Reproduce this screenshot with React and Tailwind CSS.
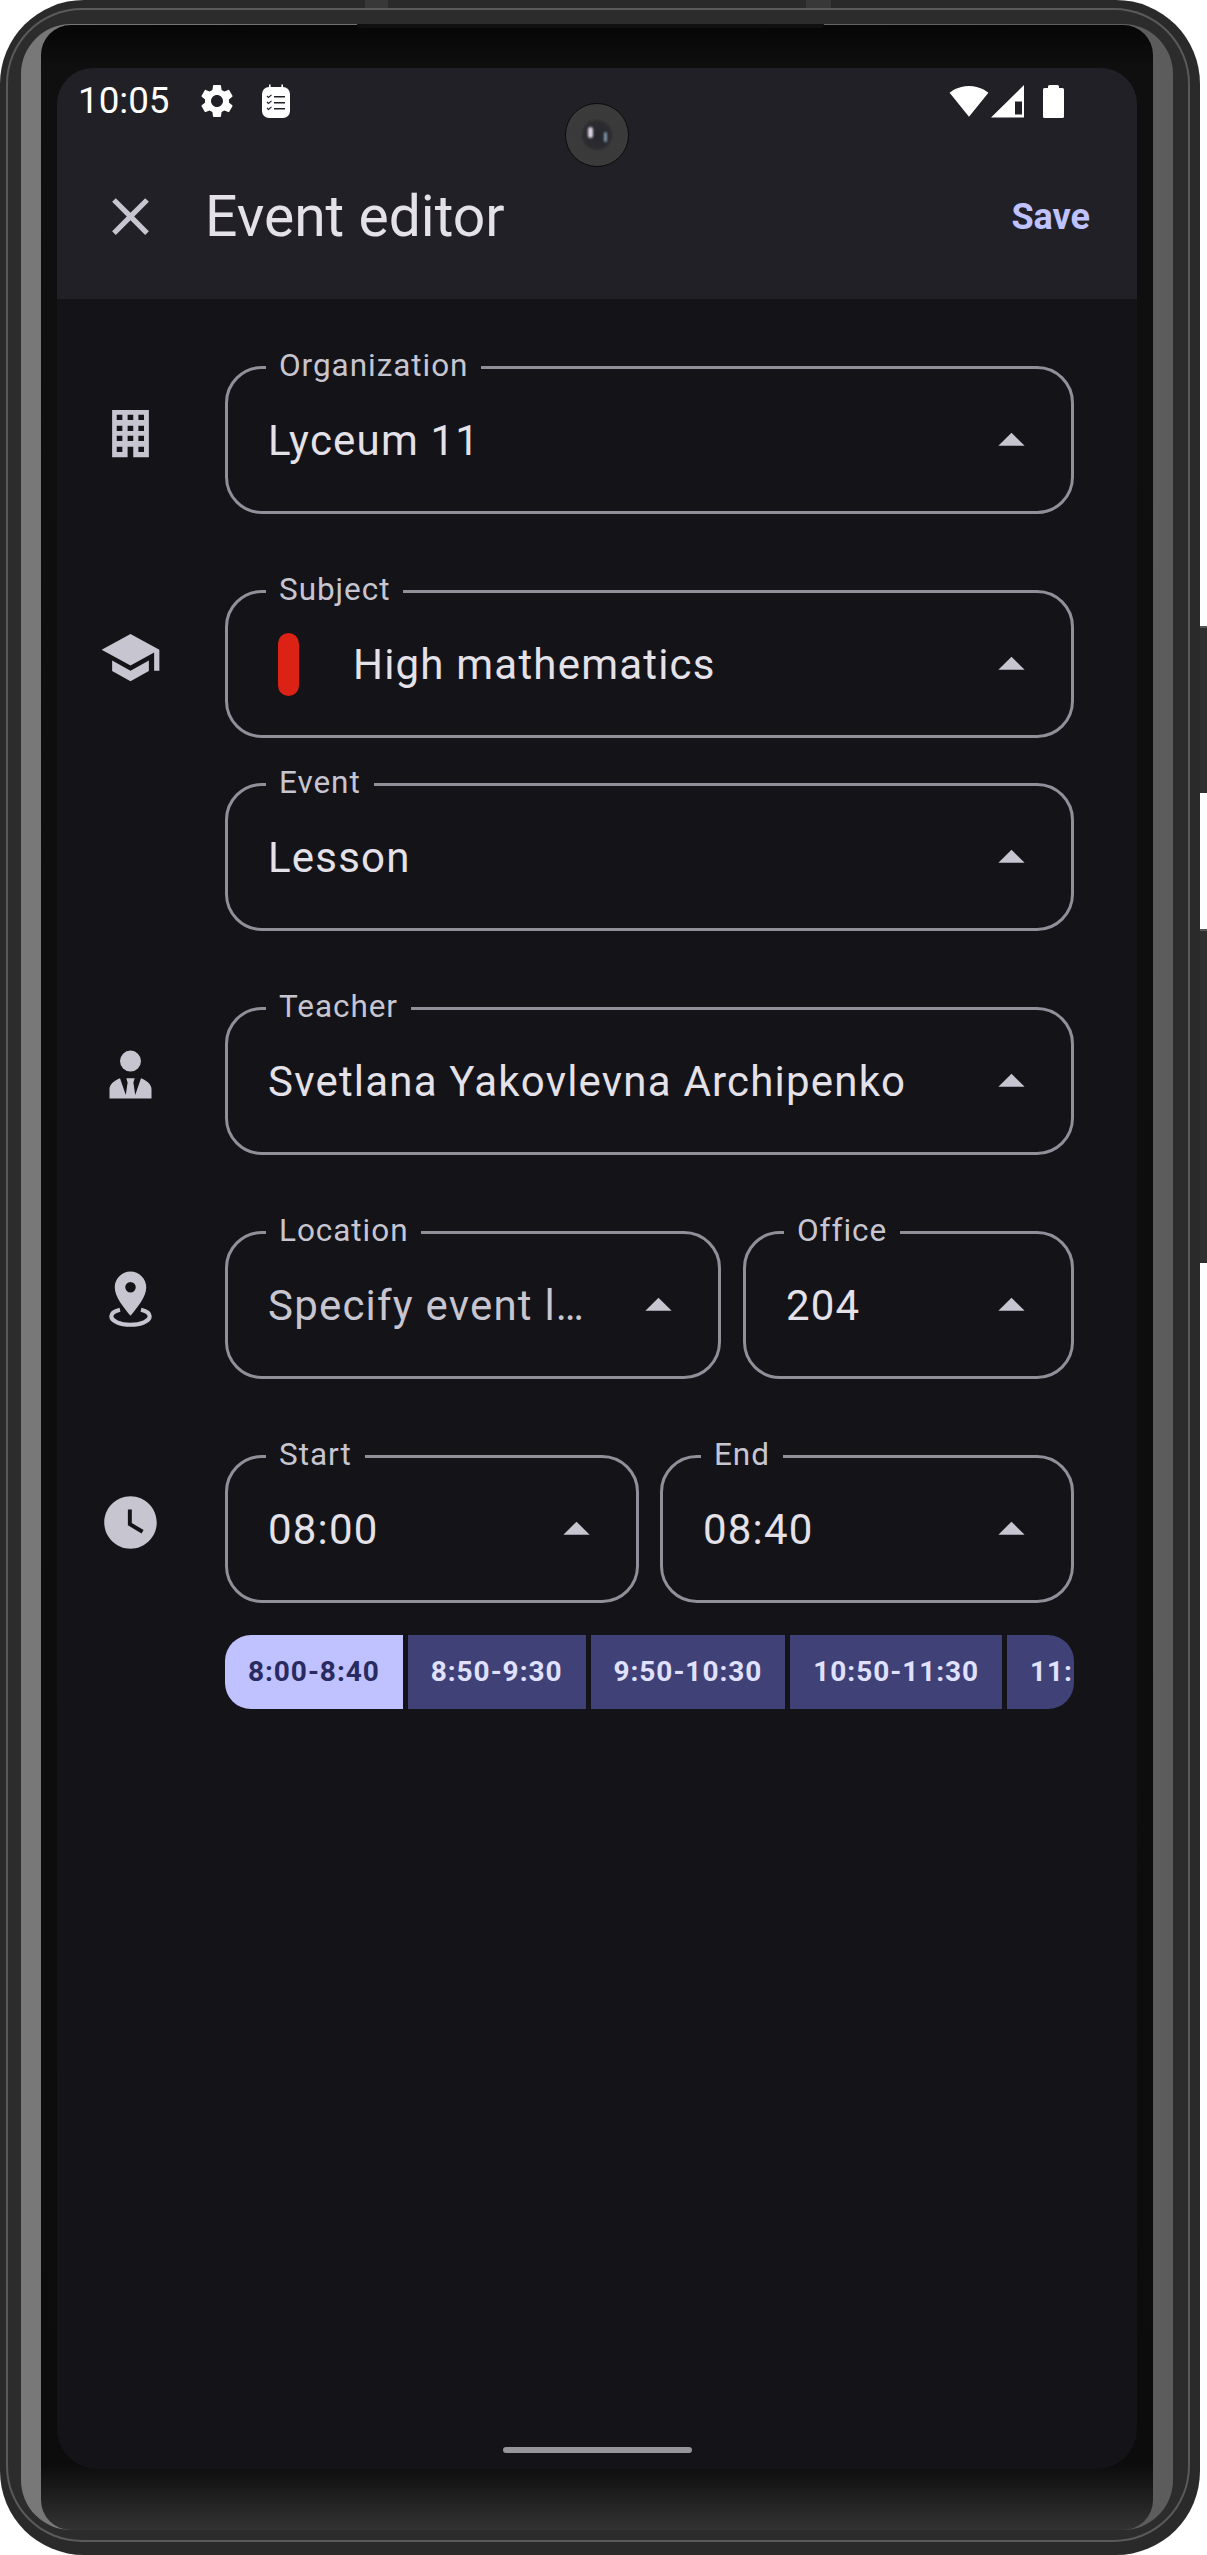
import React from 'react';

const iconClass = 'w-[63px] h-[63px] fill-[#c7c5d0] shrink-0';

function BuildingIcon() {
  return (
    <svg viewBox="0 0 24 24" className={iconClass}>
      <path
        fillRule="evenodd"
        d="M5 3h14v18h-5.95v-4H10.9v4H5z M6.75 4.9v2h2.15v-2z M10.9 4.9v2h2.15v-2z M15 4.9v2h2.15v-2z M6.75 9v2h2.15V9z M10.9 9v2h2.15V9z M15 9v2h2.15V9z M6.75 12.9v2h2.15v-2z M10.9 12.9v2h2.15v-2z M15 12.9v2h2.15v-2z M6.75 17v2h2.15v-2z M15 17v2h2.15v-2z"
      />
    </svg>
  );
}

function SchoolIcon() {
  return (
    <svg viewBox="0 0 24 24" className={iconClass}>
      <path d="M5 13.18v4L12 21l7-3.82v-4L12 17l-7-3.82zM12 3L1 9l11 6 9-4.91V17h2V9L12 3z" />
    </svg>
  );
}

function TeacherIcon() {
  return (
    <svg viewBox="0 0 24 24" className={iconClass}>
      <circle cx="12" cy="6.9" r="4" />
      <path d="M4 21.1V17.6C4 15.8 5.5 14.4 8 13.4L10.2 19.8L10.9 15L10.4 13.4H13.6L13.1 15L13.8 19.8L16 13.4C18.5 14.4 20 15.8 20 17.6V21.1Z" />
    </svg>
  );
}

function PinIcon() {
  return (
    <svg viewBox="0 0 24 24" className={iconClass}>
      <path
        fillRule="evenodd"
        d="M12 1.7C8.7 1.7 6 4.4 6 7.7C6 11.5 9.5 15.5 12 18.6C14.5 15.5 18 11.5 18 7.7C18 4.4 15.3 1.7 12 1.7ZM12 5.7a2 2 0 1 0 0 4a2 2 0 1 0 0-4Z"
      />
      <path
        d="M8 16.3C5.8 16.8 4.7 17.7 4.7 18.8C4.7 20.6 8 22 12 22C16 22 19.3 20.6 19.3 18.8C19.3 17.7 18.2 16.8 16 16.3"
        fill="none"
        stroke="#c7c5d0"
        strokeWidth="1.6"
      />
    </svg>
  );
}

function ClockIcon() {
  return (
    <svg viewBox="0 0 24 24" className={iconClass}>
      <path d="M12 2C6.5 2 2 6.5 2 12s4.5 10 10 10 10-4.5 10-10S17.5 2 12 2zm4.2 14.2L11 13V7h1.5v5.2l4.5 2.7-.8 1.3z" />
    </svg>
  );
}

function Field({ label, value, muted, pill, className = '' }) {
  return (
    <div className={`relative h-[148px] rounded-[37px] border-[3px] border-[#918f9a] flex items-center ${className}`}>
      <span className="absolute left-[38px] top-[-24px] px-[13px] bg-[#131318] text-[31.5px] leading-[42px] tracking-[0.95px] text-[#c7c5d0] whitespace-nowrap">
        {label}
      </span>
      {pill && <span className="ml-[50px] mr-[-14px] w-[21px] h-[63px] rounded-full bg-[#dc2115] shrink-0" />}
      <span className={`flex-1 min-w-0 pl-[40px] whitespace-nowrap overflow-hidden text-[42px] tracking-[1.2px] ${pill ? 'ml-[28px]' : ''} ${muted ? 'text-[#c7c5d0]' : 'text-[#e4e1e9]'}`}>
        {value}
      </span>
      <svg viewBox="0 0 24 24" className="w-[63px] h-[63px] fill-[#c7c5d0] shrink-0 mr-[28px]">
        <path d="M7 14l5-5 5 5z" />
      </svg>
    </div>
  );
}

function Row({ icon, className = '', children }) {
  return (
    <div className={`flex items-start pl-[42px] pr-[63px] ${className}`}>
      <div className="w-[63px] mt-[36px] shrink-0">{icon}</div>
      <div className="flex-1 min-w-0 ml-[63px]">{children}</div>
    </div>
  );
}

const slots = ['8:00-8:40', '8:50-9:30', '9:50-10:30', '10:50-11:30', '11:50-12:30'];

export default function App() {
  return (
    <div className="relative w-[1207px] h-[2555px] bg-white overflow-hidden font-['Roboto',sans-serif]">
      {/* side buttons */}
      <div className="absolute left-[1198px] top-[626px] w-[9px] h-[167px] bg-[#303030] border-t-2 border-[#555]" />
      <div className="absolute left-[1198px] top-[929px] w-[9px] h-[334px] bg-[#303030] border-t-2 border-[#555]" />

      {/* phone frame */}
      <div className="relative w-[1200px] h-[2555px] rounded-[84px] bg-[#2a2a2a] pl-[6px] pr-[10px] pt-[8px] pb-[13px]">
        <div className="absolute left-[365px] top-0 w-[23px] h-[8px] bg-[#383838]" />
        <div className="absolute left-[806px] top-0 w-[25px] h-[8px] bg-[#383838]" />
        <div className="h-full rounded-[76px] bg-[#5a5a5a] p-[2px]">
          <div className="relative h-full rounded-[74px] bg-[#2c2c2c] pl-[13px] pr-[15px] pt-[14px] pb-[10px]">
            {/* earpiece lip */}
            <div className="absolute left-[349px] top-[14px] w-[467px] h-[4px] rounded-b-[4px] bg-[#101010]" />
            <div className="h-full rounded-[50px] bg-linear-to-r from-[#787878] to-[#5c5c5c] pl-[20px] pr-[20px] pt-[1px]">
              <div className="h-full rounded-[30px] px-[16px] pt-[43px] bg-[linear-gradient(to_bottom,#060606_0,#0f0f0f_44px,#0c0c0c_2440px,#333333_100%)]">
                {/* screen */}
                <div className="relative h-[2401px] rounded-t-[36px] rounded-b-[40px] overflow-hidden bg-[#131318] flex flex-col">
                  {/* camera */}
                  <div className="absolute left-[508px] top-[35px] w-[64px] h-[64px] rounded-full border border-[#0c0c0c] bg-[radial-gradient(circle,#25252c_0%,#2c2c30_30%,#3a3a3a_38%,#3c3c3c_100%)]">
                    <div className="absolute left-[22px] top-[23px] w-[5px] h-[11px] rounded-full bg-[#d8d0e0] blur-[1px]" />
                    <div className="absolute left-[38px] top-[28px] w-[3px] h-[10px] rounded-full bg-[#7f9ab0] blur-[1px]" />
                  </div>

                  {/* app bar */}
                  <div className="h-[231px] bg-[#202026] shrink-0">
                    <div className="h-[66px] flex items-center pl-[21px] pr-[73px] text-white">
                      <span className="text-[36.75px] leading-none">10:05</span>
                      <svg viewBox="0 0 24 24" className="w-[40px] h-[40px] fill-white ml-[27px]">
                        <path d="M19.14 12.94c.04-.3.06-.61.06-.94 0-.32-.02-.64-.07-.94l2.03-1.58c.18-.14.23-.41.12-.61l-1.92-3.32c-.12-.22-.37-.29-.59-.22l-2.39.96c-.5-.38-1.03-.7-1.62-.94l-.36-2.54c-.04-.24-.24-.41-.48-.41h-3.84c-.24 0-.43.17-.47.41l-.36 2.54c-.59.24-1.13.57-1.62.94l-2.39-.96c-.22-.08-.47 0-.59.22L2.74 8.87c-.12.21-.08.47.12.61l2.03 1.58c-.05.3-.09.63-.09.94s.02.64.07.94l-2.03 1.58c-.18.14-.23.41-.12.61l1.92 3.32c.12.22.37.29.59.22l2.39-.96c.5.38 1.03.7 1.62.94l.36 2.54c.05.24.24.41.48.41h3.84c.24 0 .44-.17.47-.41l.36-2.54c.59-.24 1.13-.56 1.62-.94l2.39.96c.22.08.47 0 .59-.22l1.92-3.32c.12-.22.07-.47-.12-.61l-2.01-1.58zM12 15.6c-1.98 0-3.6-1.62-3.6-3.6s1.62-3.6 3.6-3.6 3.6 1.62 3.6 3.6-1.62 3.6-3.6 3.6z" />
                      </svg>
                      <svg viewBox="0 0 28 34" className="w-[28px] h-[34px] ml-[25px]">
                        <path d="M7 0.500h1.600v3H7zM19.400 0.500H21v3h-1.600z" fill="#fff" />
                        <rect x="0" y="3" width="28" height="31" rx="7" fill="#fff" />
                        <path d="M12 12h11v1.400H12zM12 18h11v1.400H12zM12 24h11v1.400H12z" fill="#202026" />
                        <path d="M5 12l1.500 1.500L9.500 10.800M5 18l1.500 1.500L9.500 16.800M5 24l1.500 1.500L9.500 22.800" fill="none" stroke="#202026" strokeWidth="1.1" />
                      </svg>
                      <svg viewBox="0 0 24 24" className="w-[40px] h-[40px] fill-white ml-auto">
                        <path d="M12.01 21.49L23.64 7c-.45-.34-4.93-4-11.64-4C5.28 3 .81 6.66.36 7l11.63 14.49.01.01.01-.01z" />
                      </svg>
                      <svg viewBox="0 0 33 33" className="w-[33px] h-[33px] ml-[2px]">
                        <path fillRule="evenodd" d="M0 32.500L33 0v32.500zM24 16.500v13h7v-13z" fill="#fff" />
                      </svg>
                      <svg viewBox="0 0 21 34" className="w-[21px] h-[34px] ml-[19px]">
                        <path d="M5 2.500A1.500 1.500 0 0 1 6.500 1h8A1.500 1.500 0 0 1 16 2.500V4h3.500A1.500 1.500 0 0 1 21 5.500v27a1.500 1.500 0 0 1-1.500 1.500h-18A1.500 1.500 0 0 1 0 32.500v-27A1.500 1.500 0 0 1 1.500 4H5z" fill="#fff" />
                      </svg>
                    </div>
                    <div className="h-[165px] flex items-center pl-[42px] pr-[47px]">
                      <svg viewBox="0 0 24 24" className="w-[63px] h-[63px] fill-[#c7c5d0]">
                        <path d="M19 6.41L17.59 5 12 10.59 6.41 5 5 6.41 10.59 12 5 17.59 6.41 19 12 13.41 17.59 19 19 17.59 13.41 12z" />
                      </svg>
                      <span className="ml-[43px] text-[57px] leading-none text-[#e4e1e9]">Event editor</span>
                      <span className="ml-auto text-[36px] font-bold leading-none text-[#bfc2ff]">Save</span>
                    </div>
                  </div>

                  {/* form */}
                  <div className="flex-1 pt-[67px]">
                    <Row icon={<BuildingIcon />}>
                      <Field label="Organization" value="Lyceum 11" />
                    </Row>
                    <Row icon={<SchoolIcon />} className="mt-[76px]">
                      <Field label="Subject" value="High mathematics" pill />
                      <Field label="Event" value="Lesson" className="mt-[45px]" />
                    </Row>
                    <Row icon={<TeacherIcon />} className="mt-[76px]">
                      <Field label="Teacher" value="Svetlana Yakovlevna Archipenko" />
                    </Row>
                    <Row icon={<PinIcon />} className="mt-[76px]">
                      <div className="flex gap-[22px]">
                        <Field label="Location" value="Specify event l…" muted className="w-[496px]" />
                        <Field label="Office" value="204" className="flex-1" />
                      </div>
                    </Row>
                    <Row icon={<ClockIcon />} className="mt-[76px]">
                      <div className="flex gap-[21px]">
                        <Field label="Start" value="08:00" className="flex-1" />
                        <Field label="End" value="08:40" className="flex-1" />
                      </div>
                      <div className="mt-[32px] h-[74px] rounded-[26px] overflow-hidden flex gap-[5px]">
                        {slots.map((slot, i) => (
                          <div
                            key={slot}
                            className={`h-full shrink-0 px-[23px] flex items-center text-[28px] font-bold tracking-[0.95px] ${
                              i === 0 ? 'bg-[#bfc2ff] text-[#282a60]' : 'bg-[#3f4177] text-[#e0e0ff]'
                            }`}
                          >
                            {slot}
                          </div>
                        ))}
                      </div>
                    </Row>
                  </div>

                  {/* home indicator */}
                  <div className="h-[6px] w-[189px] mx-auto mb-[16px] rounded-full bg-[#96959a] shrink-0" />
                </div>
              </div>
            </div>
          </div>
        </div>
      </div>
    </div>
  );
}
